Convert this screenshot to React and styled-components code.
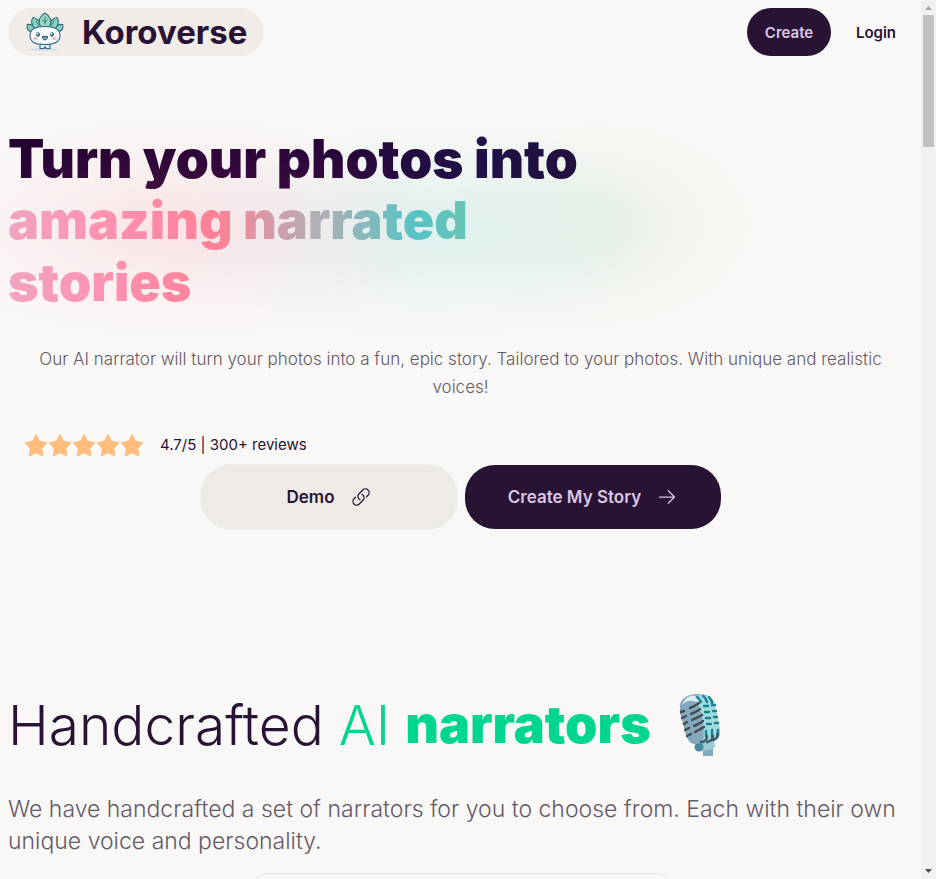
import React from 'react';
import styled, { createGlobalStyle } from 'styled-components';

const GlobalStyle = createGlobalStyle`
  *, *::before, *::after { box-sizing: border-box; }
  body {
    margin: 0;
    background: #f9f8f6;
    color: #291334;
    font-family: Inter, 'Liberation Sans', sans-serif;
  }
  h1, h2, p { margin: 0; }
`;

const Window = styled.div`
  display: grid;
  grid-template-columns: minmax(0, 1fr) 15px;
  height: 100vh;
  overflow: hidden;
`;

const Page = styled.div`
  height: 100vh;
  overflow: hidden;
  padding: 8px;
`;

const ScrollTrack = styled.div`
  display: flex;
  flex-direction: column;
  align-items: center;
  height: 100vh;
  background: #f1f1f1;
`;

const ScrollThumb = styled.div`
  width: 11px;
  height: 15%;
  background: #c1c1c1;
`;

const ScrollArrow = styled.svg`
  display: block;
  width: 15px;
  height: 15px;
  margin-top: ${(p) => (p.$end ? 'auto' : 0)};
  fill: ${(p) => (p.$end ? '#505050' : '#a3a3a3')};
`;

const Header = styled.header`
  display: flex;
  align-items: center;
  justify-content: space-between;
`;

const Brand = styled.a`
  display: flex;
  align-items: center;
  gap: 17px;
  height: 48px;
  padding: 0 17px;
  border-radius: 24px;
  background: #f1ece8;
  color: inherit;
  font-size: 33px;
  font-weight: 700;
  line-height: 48px;
  text-decoration: none;
`;

const MascotArt = styled.svg`
  width: 40px;
  height: 40px;
`;

const Nav = styled.nav`
  display: flex;
  gap: 8px;
`;

const NavButton = styled.button`
  min-width: ${(p) => (p.$primary ? '84px' : '74px')};
  height: 48px;
  padding: 0 16px;
  border: 0;
  border-radius: 24px;
  background: ${(p) => (p.$primary ? '#291334' : 'transparent')};
  color: ${(p) => (p.$primary ? '#d9c7e3' : '#291334')};
  font-family: inherit;
  font-size: 15px;
  font-weight: 600;
  cursor: pointer;
`;

const Hero = styled.section`
  display: flex;
  flex-direction: column;
  padding-top: 72px;
`;

const HeroTitle = styled.h1`
  position: relative;
  isolation: isolate;
  max-width: 640px;
  font-size: 53px;
  font-weight: 900;
  line-height: 62px;

  &::before {
    content: '';
    position: absolute;
    z-index: -1;
    inset: -36px -140px -36px -8px;
    background:
      radial-gradient(ellipse 270px 115px at 180px 136px, rgba(255, 120, 150, 0.17), rgba(255, 120, 150, 0.05) 60%, transparent),
      radial-gradient(ellipse 250px 115px at 430px 140px, rgba(80, 200, 200, 0.16), rgba(80, 200, 200, 0.05) 60%, transparent),
      radial-gradient(ellipse 170px 115px at 600px 132px, rgba(130, 190, 120, 0.12), rgba(130, 190, 120, 0.04) 60%, transparent);
  }
`;

const TitleLead = styled.span`
  display: block;
  background:
    radial-gradient(ellipse 260px 50px at 180px 100%, rgba(80, 20, 70, 0.6), transparent),
    linear-gradient(90deg, #260333 0%, #28063a 50%, #1f1147 75%, #251036 100%);
  background-clip: text;
  color: transparent;
`;

const TitleAccent = styled.span`
  display: block;
  background: linear-gradient(
    90deg,
    #f0a3c0 0,
    #ff91b2 100px,
    #ff8096 205px,
    #b5aeb4 305px,
    #55c3c5 410px,
    #6bc6b2 465px
  );
  background-clip: text;
  color: transparent;
  font-size: 52px;
`;

const HeroText = styled.p`
  margin-top: 31px;
  padding: 0 16px;
  color: #655a69;
  font-size: 17px;
  font-weight: 300;
  line-height: 28px;
  text-align: center;
`;

const Rating = styled.div`
  display: flex;
  align-items: center;
  gap: 16px;
  margin-top: 32px;
  padding-left: 16px;
  font-size: 15px;
  line-height: 24px;
`;

const Stars = styled.div`
  display: flex;
`;

const StarArt = styled.svg`
  width: 24px;
  height: 24px;
  fill: #ffbe7d;
  stroke: #ffbe7d;
  stroke-width: 1;
  stroke-linejoin: round;
`;

const Actions = styled.div`
  display: flex;
  flex-wrap: wrap;
  justify-content: center;
  gap: 8px;
  margin-top: 8px;
`;

const ActionButton = styled.button`
  display: flex;
  align-items: center;
  justify-content: center;
  gap: 16px;
  width: 256px;
  height: 64px;
  border: 0;
  border-radius: 30px;
  background: ${(p) => (p.$primary ? '#291334' : '#eeeae6')};
  box-shadow: ${(p) => (p.$primary ? 'none' : '0 0 0 1px #f1eeea')};
  color: ${(p) => (p.$primary ? '#d9c7e3' : '#291334')};
  font-family: inherit;
  font-size: 17px;
  font-weight: 600;
  cursor: pointer;
`;

const LineIcon = styled.svg`
  width: 20px;
  height: 20px;
  fill: none;
  stroke: currentColor;
  stroke-width: 1.5;
  stroke-linecap: round;
  stroke-linejoin: round;
`;

const Narrators = styled.section`
  padding-top: 160px;
`;

const SectionTitle = styled.h2`
  display: flex;
  align-items: center;
  gap: 15px;
  font-size: 55px;
  font-weight: 300;
  line-height: 72px;
`;

const Accent = styled.span`
  color: #00d68f;
  font-size: ${(p) => (p.$heavy ? 52 : 55)}px;
  font-weight: ${(p) => (p.$heavy ? 900 : 300)};
`;

const MicArt = styled.svg`
  width: 72px;
  height: 64px;
`;

const SectionText = styled.p`
  margin-top: 32px;
  color: #655a69;
  font-size: 23px;
  font-weight: 300;
  line-height: 32px;
`;

const Card = styled.div`
  width: 420px;
  height: 320px;
  margin: 16px auto 0;
  border: 1px solid #e7e5e2;
  border-radius: 16px;
`;

function Mascot() {
  return (
    <MascotArt viewBox="0 0 40 40" aria-hidden="true">
      <ellipse cx="19" cy="37.5" rx="14" ry="1" fill="#c3dcec" />
      <g stroke="#2f6584" strokeWidth="1.1" strokeLinejoin="round" strokeLinecap="round">
        <path d="M7 20C3 19 1.500 16 2.200 12.500C6 12 10 14 11 18Z" fill="#82cfb4" />
        <path d="M33 20C37 19 38.500 16 37.800 12.500C34 12 30 14 29 18Z" fill="#82cfb4" />
        <path d="M10 17C6 13 6 8 8 5.500C12 6 15 9 17 15Z" fill="#8ad4b8" />
        <path d="M30 17C34 13 34 8 32 5.500C28 6 25 9 23 15Z" fill="#8ad4b8" />
        <path d="M16 15C12 9 15 4 20 1C25 4 28 9 24 15Z" fill="#94dabe" />
        <path d="M15 31.500V36.500H19L20 34.500L21 36.500H25V31.500" fill="#dff1fa" />
        <path d="M5 23.500C5 17 10 14.500 20 14.500C30 14.500 35 17 35 23.500C35 30 30 32.500 20 32.500C10 32.500 5 30 5 23.500Z" fill="#fafdff" />
        <path d="M20 5V12M17.500 8L20 10L22.500 8M11 9L14 14M29 9L26 14" fill="none" strokeWidth="0.8" />
      </g>
      <g fill="#3a5f80">
        <ellipse cx="13" cy="22.500" rx="2" ry="2.300" />
        <ellipse cx="27" cy="22.500" rx="2" ry="2.300" />
      </g>
      <g fill="#fff">
        <circle cx="12.500" cy="21.800" r="0.900" />
        <circle cx="26.500" cy="21.800" r="0.900" />
      </g>
      <path d="M17.500 24.500H22.500C22.500 29 17.500 29 17.500 24.500Z" fill="#8fa9c4" stroke="#264d70" />
      <ellipse cx="10.500" cy="26.500" rx="2.400" ry="1.700" fill="#f8bcc5" />
      <ellipse cx="29.500" cy="26.500" rx="2.400" ry="1.700" fill="#f8bcc5" />
    </MascotArt>
  );
}

function Microphone() {
  return (
    <MicArt viewBox="0 0 72 64" role="img" aria-label="Studio microphone">
      <path d="M37 49H47V63H37Z" fill="#82abc2" />
      <path d="M28 48L48 46L49 54C45 58 36 59 31 56Z" fill="#9bcbd5" />
      <circle cx="33" cy="54" r="4.500" fill="#4a89a4" />
      <path d="M14 13C14 5 23 1 31 1C41 1 48 4 49 12L54 37C55 44 50 49 42 50L29 51C24 51 21 46 20 42L14 20Z" fill="#84a9bf" />
      <path d="M27 3C39 0 48 3 49 12L54 37C55 44 50 49 42 50L37 50C39 35 37 15 27 3Z" fill="#9edce0" />
      <path d="M16 12C19 4 25 2 29 3C33 7 32 10 27 8C23 7 19 9 16 12Z" fill="#dcebef" />
      <g fill="none" strokeWidth="2.400" strokeLinecap="round">
        <path d="M15 19L18 18M16 25L20 23M18 31L21 29M19 37L23 35M21 43L25 41M24 15C28 13 31 12 33 10M25 21C29 19 32 18 34 16M26 27C30 25 33 24 36 22M28 33C32 31 35 30 37 28M29 39C33 37 35 36 38 34" stroke="#46474f" />
        <path d="M31 4C33 5 34 7 35 9M37 3C39 4 40 6 41 9M43 4C45 6 46 8 46 10M38 13H42M46 12H49M39 19H43M47 18H50M40 25H44M48 24H51M41 31H45M49 30H52M40 38V43M46 37V44M52 37L51 43" stroke="#1d8090" />
        <path d="M35 49C39 49 41 46 41 43M41 49C45 48 47 46 47 43M47 47C50 46 52 44 52 41" stroke="#405b68" />
      </g>
    </MicArt>
  );
}

function Star() {
  return (
    <StarArt viewBox="0 0 24 24" aria-hidden="true">
      <path d="M12 1.500L15.500 8.200L23 9.700L17.800 15.200L18.800 23L12 19.700L5.200 23L6.200 15.200L1 9.700L8.500 8.200Z" />
    </StarArt>
  );
}

export default function App() {
  return (
    <Window>
      <GlobalStyle />
      <Page>
        <Header>
          <Brand href="#">
            <Mascot />
            Koroverse
          </Brand>
          <Nav>
            <NavButton type="button" $primary>Create</NavButton>
            <NavButton type="button">Login</NavButton>
          </Nav>
        </Header>
        <main>
          <Hero>
            <HeroTitle>
              <TitleLead>Turn your photos into</TitleLead>
              <TitleAccent>amazing narrated stories</TitleAccent>
            </HeroTitle>
            <HeroText>
              Our AI narrator will turn your photos into a fun, epic story. Tailored to your photos.
              With unique and realistic voices!
            </HeroText>
            <Rating>
              <Stars role="img" aria-label="Rated 4.7 out of 5">
                {[1, 2, 3, 4, 5].map((n) => (
                  <Star key={n} />
                ))}
              </Stars>
              <span>4.7/5 | 300+ reviews</span>
            </Rating>
            <Actions>
              <ActionButton type="button">
                Demo
                <LineIcon viewBox="0 0 24 24" aria-hidden="true">
                  <path d="M13.190 8.688a4.500 4.500 0 0 1 1.242 7.244l-4.500 4.500a4.500 4.500 0 0 1-6.364-6.364l1.757-1.757m13.350-.622 1.757-1.757a4.500 4.500 0 0 0-6.364-6.364l-4.500 4.500a4.500 4.500 0 0 0 1.242 7.244" />
                </LineIcon>
              </ActionButton>
              <ActionButton type="button" $primary>
                Create My Story
                <LineIcon viewBox="0 0 24 24" aria-hidden="true">
                  <path d="M13.500 4.500 21 12m0 0-7.500 7.500M21 12H3" />
                </LineIcon>
              </ActionButton>
            </Actions>
          </Hero>
          <Narrators>
            <SectionTitle>
              <span>Handcrafted</span>
              <Accent>AI</Accent>
              <Accent $heavy>narrators</Accent>
              <Microphone />
            </SectionTitle>
            <SectionText>
              We have handcrafted a set of narrators for you to choose from. Each with their own
              unique voice and personality.
            </SectionText>
            <Card />
          </Narrators>
        </main>
      </Page>
      <ScrollTrack aria-hidden="true">
        <ScrollArrow viewBox="0 0 15 15">
          <path d="M4 10L7.500 6L11 10Z" />
        </ScrollArrow>
        <ScrollThumb />
        <ScrollArrow viewBox="0 0 15 15" $end>
          <path d="M4 5L7.500 9L11 5Z" />
        </ScrollArrow>
      </ScrollTrack>
    </Window>
  );
}
